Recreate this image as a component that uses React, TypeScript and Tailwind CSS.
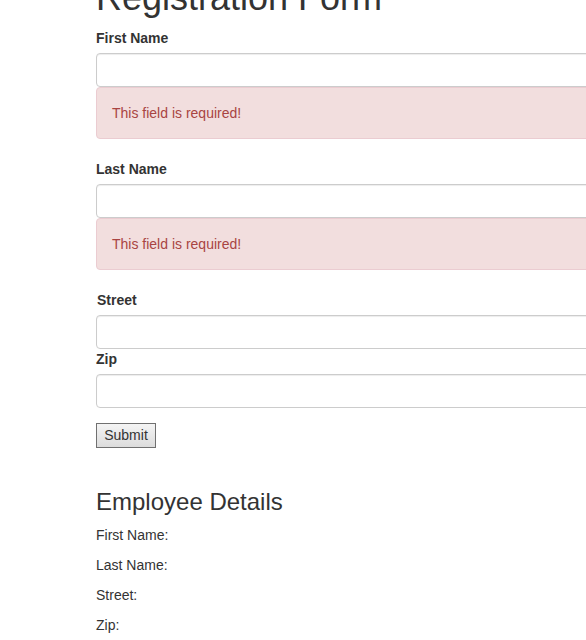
import React from "react";

function Field({ label, error, labelClass = "" }: { label: string; error?: boolean; labelClass?: string }) {
  return (
    <div>
      <label className={`block font-bold mb-[5px] ${labelClass}`}>{label}</label>
      <input
        type="text"
        className="block w-full h-[34px] px-[12px] py-[6px] bg-white border border-[#ccc] rounded-[4px] shadow-[inset_0_1px_1px_rgba(0,0,0,0.075)] outline-none"
      />
      {error && (
        <div className="p-[15px] border border-[#ebccd1] bg-[#f2dede] text-[#a94442] rounded-[4px] mb-[20px]">
          This field is required!
        </div>
      )}
    </div>
  );
}

export default function App() {
  return (
    <div className="w-[586px] h-[640px] overflow-hidden bg-white font-['Liberation_Sans',Arial,sans-serif] text-[14px] leading-[20px] text-[#333]">
      <div className="ml-[96px] w-[620px] mt-[-22px]">
        <h1 className="text-[36px] leading-[1.1] font-normal mb-[10px]">Registration Form</h1>
        <form>
          <Field label="First Name" error />
          <Field label="Last Name" error />
          <Field label="Street" labelClass="ml-[1px]" />
          <Field label="Zip" />
          <button
            type="button"
            className="mt-[15px] h-[25px] w-[60px] border border-[#707070] bg-gradient-to-b from-[#f4f4f4] to-[#dcdcdc] text-[14px] text-[#333] leading-none"
          >
            Submit
          </button>
        </form>
        <h3 className="mt-[41px] mb-[10px] text-[24px] leading-[1.1] font-normal">Employee Details</h3>
        <p className="mb-[10px]">First Name:</p>
        <p className="mb-[10px]">Last Name:</p>
        <p className="mb-[10px]">Street:</p>
        <p className="mb-[10px]">Zip:</p>
      </div>
    </div>
  );
}
